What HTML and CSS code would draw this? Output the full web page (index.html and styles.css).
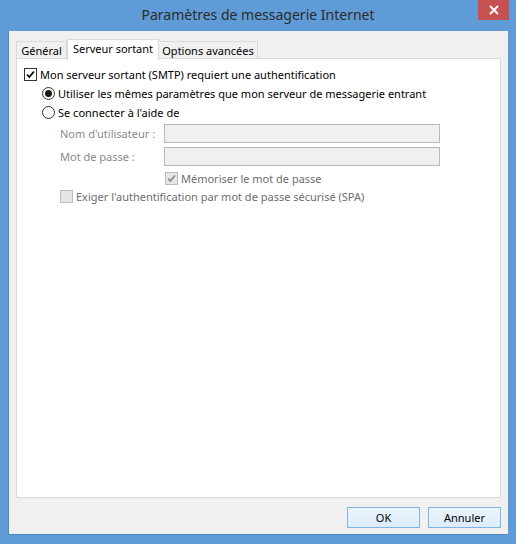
FILE: index.html
```html
<!DOCTYPE html>
<html lang="fr">
  <head>
    <title>Paramètres de messagerie Internet</title>
    <meta charset="UTF-8" />
    <link rel="stylesheet" href="styles.css">
  </head>
  <body>
    <div class="window">
      <div class="titlebar">
        <span></span>
        <h1 class="title">Paramètres de messagerie Internet</h1>
        <button class="close" type="button" aria-label="Fermer">
          <svg width="10" height="10" viewBox="0 0 10 10"><path d="M1 1L9 9M9 1L1 9" stroke="#fff" stroke-width="2"/></svg>
        </button>
      </div>
      <div class="client">
        <div class="tabs">
          <div class="tab">Général</div>
          <div class="tab active">Serveur sortant</div>
          <div class="tab">Options avancées</div>
        </div>
        <div class="panel">
          <label class="row">
            <span class="check on">
              <svg width="11" height="11" viewBox="0 0 11 11"><path d="M2 5.5L4.3 8L9 2.5" fill="none" stroke="#000" stroke-width="1.8"/></svg>
            </span>
            Mon serveur sortant (SMTP) requiert une authentification
          </label>
          <div class="group">
            <label class="row">
              <span class="radio selected"></span>
              Utiliser les mêmes paramètres que mon serveur de messagerie entrant
            </label>
            <label class="row">
              <span class="radio"></span>
              Se connecter à l'aide de
            </label>
            <div class="fields">
              <div class="field">
                <span class="field-label">Nom d'utilisateur :</span>
                <input type="text" disabled>
              </div>
              <div class="field">
                <span class="field-label">Mot de passe :</span>
                <input type="password" disabled>
              </div>
              <label class="row small remember">
                <span class="check off">
                  <svg width="11" height="11" viewBox="0 0 11 11"><path d="M2 5.5L4.3 8L9 2.5" fill="none" stroke="#8a8a8a" stroke-width="1.8"/></svg>
                </span>
                Mémoriser le mot de passe
              </label>
              <label class="row small spa">
                <span class="check off"></span>
                Exiger l'authentification par mot de passe sécurisé (SPA)
              </label>
            </div>
          </div>
        </div>
        <div class="actions">
          <button class="btn" type="button">OK</button>
          <button class="btn" type="button">Annuler</button>
        </div>
      </div>
    </div>
  </body>
</html>
```

FILE: styles.css
```css
/* Reset */
* {
  margin: 0;
  padding: 0;
  box-sizing: border-box;
}

body {
  background: #5f9bd6;
  font-family: "Noto Sans", "Open Sans", sans-serif;
  font-size: 11px;
  color: #000;
}

/* Window frame */
.window {
  width: 516px;
  height: 544px;
  background: #5f9bd6;
  display: flex;
  flex-direction: column;
}

.titlebar {
  height: 31px;
  display: grid;
  grid-template-columns: 1fr auto 1fr;
  align-items: start;
}

.title {
  font-size: 14px;
  font-weight: normal;
  color: #2b2b2b;
  line-height: 30px;
}

.close {
  justify-self: end;
  width: 31px;
  height: 20px;
  margin-right: 7px;
  background: #c75050;
  border: none;
  display: flex;
  align-items: center;
  justify-content: center;
}

/* Client area */
.client {
  margin: 0 8px;
  height: 504px;
  background: #f0f0f0;
  border-left: 1px solid #4f88c4;
  border-bottom: 1px solid #4f88c4;
  padding: 7px 7px 0 7px;
  display: flex;
  flex-direction: column;
}

/* Tabs */
.tabs {
  display: flex;
  align-items: flex-end;
  height: 21px;
  position: relative;
  z-index: 1;
}

.tab {
  flex: none;
  height: 17px;
  line-height: 17px;
  white-space: nowrap;
  background: #f0f0f0;
  border: 1px solid #d9d9d9;
  border-bottom: none;
  margin-bottom: 1px;
  text-align: center;
}

.tab:first-child {
  width: 51px;
}

.tab:last-child {
  width: 99px;
}

.tab + .tab {
  border-left: none;
}

.tab.active {
  width: 92px;
  height: 21px;
  line-height: 18px;
  background: #fff;
  border-left: 1px solid #d9d9d9;
  margin-bottom: -1px;
}

.tab.active + .tab {
  border-left: none;
}

.panel {
  height: 440px;
  background: #fff;
  border: 1px solid #d9d9d9;
  margin-top: -1px;
  padding: 6px 7px 0 7px;
}

/* Rows */
.row {
  height: 19px;
  display: flex;
  align-items: center;
  gap: 3px;
  white-space: nowrap;
}

.group {
  padding-left: 18px;
}

.check {
  width: 13px;
  height: 13px;
  border: 1px solid #333;
  background: #fff;
  display: flex;
  align-items: center;
  justify-content: center;
  flex: none;
}

.check.off {
  border-color: #bcbcbc;
  background: #e6e6e6;
}

.radio {
  width: 13px;
  height: 13px;
  border: 1px solid #333;
  border-radius: 50%;
  background: #fff;
  display: flex;
  align-items: center;
  justify-content: center;
  flex: none;
}

.radio.selected::after {
  content: "";
  width: 7px;
  height: 7px;
  border-radius: 50%;
  background: #1a1a1a;
}

/* Disabled fields */
.fields {
  padding-left: 18px;
  margin-top: 2px;
  color: #6d6d6d;
}

.field {
  display: flex;
  align-items: center;
  height: 19px;
  margin-bottom: 4px;
}

.field-label {
  width: 104px;
  color: #8a8a8a;
}

.field input {
  width: 276px;
  height: 19px;
  background: #f0f0f0;
  border: 1px solid #b5b8bc;
}

.row.small {
  height: 17px;
}

.remember {
  margin-top: 3px;
  padding-left: 105px;
}

.spa {
  margin-top: 1px;
}

/* Buttons */
.actions {
  display: flex;
  justify-content: flex-end;
  gap: 8px;
  margin-top: 9px;
}

.btn {
  width: 73px;
  height: 21px;
  font-family: inherit;
  font-size: 11px;
  color: #000;
  background: linear-gradient(#ecf4fc, #dcecfc);
  border: 1px solid #7eb4ea;
}
```
